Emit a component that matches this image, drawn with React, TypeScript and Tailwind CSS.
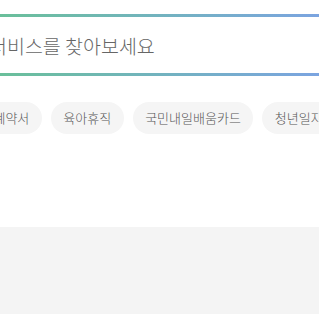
import React from "react";

const chips = ["근로계약서", "육아휴직", "국민내일배움카드", "청년일자리도약장려금"];

export default function App() {
  return (
    <div
      className="w-[319px] h-[314px] overflow-hidden bg-white flex flex-col"
      style={{ fontFamily: '"Noto Sans CJK KR", "Noto Sans", sans-serif' }}
    >
      <div className="pt-[14px]">
        <div className="h-[3px] w-full bg-gradient-to-r from-[#6abf9a] to-[#7ba4e0]" />
        <div className="h-[56px] flex items-center">
          <span className="ml-[-11px] mt-[2px] whitespace-nowrap text-[19.5px] font-light text-[#666666]">서비스를 찾아보세요</span>
        </div>
        <div className="h-[3px] w-full bg-gradient-to-r from-[#6abf9a] to-[#7ba4e0]" />
      </div>
      <div className="mt-[26px] flex gap-[9px] ml-[-43px] whitespace-nowrap">
        {chips.map((c) => (
          <div
            key={c}
            className="h-[32px] shrink-0 px-[12.5px] rounded-full bg-[#f5f5f5] text-[13px] font-light text-[#555555] flex items-center"
          >
            {c}
          </div>
        ))}
      </div>
      <div className="flex-1" />
      <div className="h-[87px] bg-[#f4f4f4] shrink-0" />
    </div>
  );
}
